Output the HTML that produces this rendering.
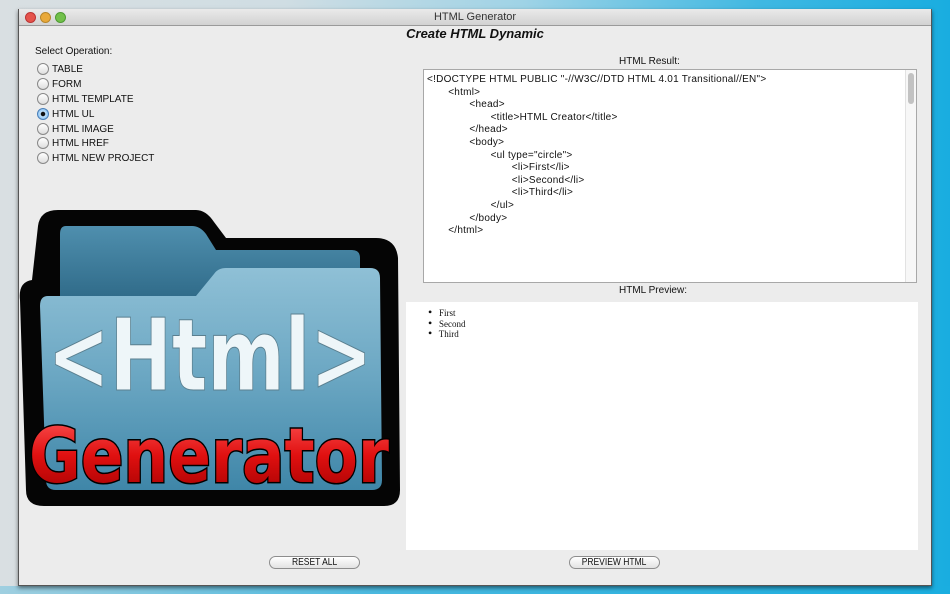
<!DOCTYPE html>
<html><head><meta charset="utf-8">
<style>
*{margin:0;padding:0;box-sizing:border-box}
body{width:950px;height:594px;overflow:hidden;position:relative;font-family:"Liberation Sans",sans-serif;
background:linear-gradient(90deg,#d9dfe2 0%,#cfdde3 30%,#9fd3e6 55%,#3fb8e2 80%,#19ade0 100%)}
.bot{position:absolute;left:0;top:586px;width:950px;height:8px;background:linear-gradient(90deg,#9fcfe0,#4ab9e0 40%,#1aaee0)}
.win{position:absolute;left:18px;top:9px;width:914px;height:577px;background:#ececec;border:1px solid #555;border-top:none;box-shadow:0 2px 4px rgba(0,0,0,.5)}
.tb{position:absolute;left:0;top:0;width:100%;height:17px;background:linear-gradient(#eaeaea,#d2d2d2);border-bottom:1px solid #9a9a9a;text-align:center;font-size:11px;line-height:17px;color:#333}
.dot{position:absolute;top:3px;width:11px;height:11px;border-radius:50%}
.abs{position:absolute}
.lbl{font-size:10px;color:#111}
.rad{position:absolute;left:18px;font-size:10px;color:#111;height:15px;line-height:14px}
.rad i{display:inline-block;width:12px;height:12px;border-radius:50%;border:1px solid #888;background:linear-gradient(#fff,#ddd);vertical-align:-3px;margin-right:3px;position:relative}
.rad i.on{background:radial-gradient(circle,#111 0 2px,#bfe0fb 2.5px,#6fb2ee 100%);border-color:#4a7fb8}
.code{position:absolute;left:404px;top:60px;width:494px;height:214px;background:#fff;border:1px solid #a8a8a8;font-size:10px;letter-spacing:.25px;color:#111;padding:4px 0 0 3px;line-height:12.6px;white-space:pre;font-family:"Liberation Sans",sans-serif}
.btn{position:absolute;height:13px;border:1px solid #8d8d8d;border-radius:7px;background:linear-gradient(#fff,#e2e2e2);font-size:10px;text-align:center;line-height:11px;color:#111;width:91px;transform-origin:center}
.btn span{display:inline-block;transform:scaleX(.85)}
</style></head><body>
<div class="bot"></div>
<div class="win">
<div class="tb">HTML Generator
<div class="dot" style="left:6px;background:#e5534b;border:1px solid #b33"></div>
<div class="dot" style="left:21px;background:#e9a93a;border:1px solid #b8862a"></div>
<div class="dot" style="left:36px;background:#72c04a;border:1px solid #4e9a32"></div>
</div>
<div class="abs" style="left:0;width:100%;top:17px;text-align:center;font-size:13px;font-weight:bold;font-style:italic;color:#111">Create HTML Dynamic</div>
<div class="abs lbl" style="left:16px;top:37px">Select Operation:</div>
<div class="rad" style="top:54px"><i></i>TABLE</div>
<div class="rad" style="top:69px"><i></i>FORM</div>
<div class="rad" style="top:84px"><i></i>HTML TEMPLATE</div>
<div class="rad" style="top:99px"><i class="on"></i>HTML UL</div>
<div class="rad" style="top:114px"><i></i>HTML IMAGE</div>
<div class="rad" style="top:128px"><i></i>HTML HREF</div>
<div class="rad" style="top:143px"><i></i>HTML NEW PROJECT</div>
<div class="abs lbl" style="left:600px;top:47px">HTML Result:</div>
<div class="code">&lt;!DOCTYPE HTML PUBLIC "-//W3C//DTD HTML 4.01 Transitional//EN"&gt;
       &lt;html&gt;
              &lt;head&gt;
                     &lt;title&gt;HTML Creator&lt;/title&gt;
              &lt;/head&gt;
              &lt;body&gt;
                     &lt;ul type="circle"&gt;
                            &lt;li&gt;First&lt;/li&gt;
                            &lt;li&gt;Second&lt;/li&gt;
                            &lt;li&gt;Third&lt;/li&gt;
                     &lt;/ul&gt;
              &lt;/body&gt;
       &lt;/html&gt;<div class="abs" style="right:0;top:0;width:11px;height:212px;background:#f7f7f7;border-left:1px solid #e2e2e2"><div class="abs" style="left:2px;top:3px;width:6px;height:31px;border-radius:3px;background:#c2c2c2"></div></div></div>
<div class="abs lbl" style="left:600px;top:276px">HTML Preview:</div>
<div class="abs" style="left:387px;top:293px;width:512px;height:248px;background:#fff;font-family:'Liberation Serif',serif;font-size:9px;line-height:10.5px;color:#111;padding:6px 0 0 22px">
<div><span style="font-size:12px;line-height:9px">&bull;</span>&nbsp;&nbsp; First</div><div><span style="font-size:12px;line-height:9px">&bull;</span>&nbsp;&nbsp; Second</div><div><span style="font-size:12px;line-height:9px">&bull;</span>&nbsp;&nbsp; Third</div></div>
<div class="btn" style="left:250px;top:547px"><span>RESET ALL</span></div>
<div class="btn" style="left:550px;top:547px"><span>PREVIEW HTML</span></div>
</div>
<svg class="abs" style="left:0;top:0" width="420" height="520" viewBox="0 0 420 520">
<defs>
<linearGradient id="bk" x1="0" y1="0" x2="0" y2="1"><stop offset="0" stop-color="#4f8fae"/><stop offset="1" stop-color="#2f6a88"/></linearGradient>
<linearGradient id="fr" x1="0" y1="0" x2="0" y2="1"><stop offset="0" stop-color="#8fc0d6"/><stop offset=".5" stop-color="#6aa6c2"/><stop offset="1" stop-color="#3f86a8"/></linearGradient>
<linearGradient id="rd" x1="0" y1="0" x2="0" y2="1"><stop offset="0" stop-color="#ff5a5a"/><stop offset=".5" stop-color="#e01010"/><stop offset="1" stop-color="#a00000"/></linearGradient>
</defs>
<path d="M58 210 H196 Q206 210 214 222 L226 238 H376 Q396 238 398 258 L400 490 Q400 506 384 506 H44 Q26 506 26 490 L20 300 Q18 282 32 280 L38 226 Q40 210 58 210 Z" fill="#050505"/>
<path d="M66 226 H192 Q200 226 206 234 L216 250 H352 Q360 250 360 258 V300 H60 V234 Q60 226 66 226 Z" fill="url(#bk)"/>
<path d="M48 296 H196 L214 274 Q218 268 226 268 H370 Q380 268 380 278 L382 480 Q382 490 372 490 H56 Q46 490 46 480 L40 306 Q40 296 48 296 Z" fill="url(#fr)"/>
<text x="210" y="390" text-anchor="middle" font-family="'DejaVu Sans',sans-serif" font-weight="bold" font-size="100" fill="#eef6f9" stroke="#5a7f8f" stroke-width="1" textLength="325" lengthAdjust="spacingAndGlyphs">&lt;Html&gt;</text>
<text x="209" y="482" text-anchor="middle" font-family="'DejaVu Sans',sans-serif" font-weight="bold" font-size="76" fill="url(#rd)" stroke="#000" stroke-width="3" paint-order="stroke" textLength="360" lengthAdjust="spacingAndGlyphs">Generator</text>
</svg>
</body></html>
